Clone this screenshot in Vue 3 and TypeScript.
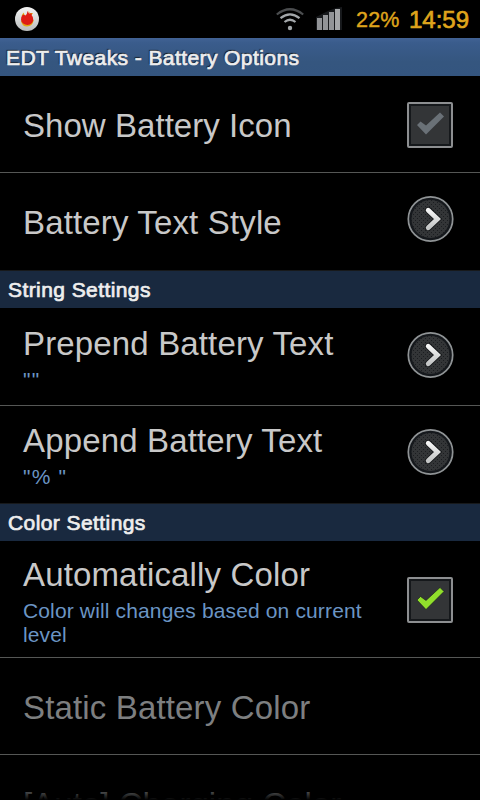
<script setup lang="ts">
type Control = 'check-off' | 'check-on' | 'arrow' | 'none'

interface Option {
  id: string
  title: string
  summary?: string
  control: Control
  disabled?: boolean
}

interface Section {
  heading?: string
  options: Option[]
}

const sections: Section[] = [
  {
    options: [
      { id: 'show-icon', title: 'Show Battery Icon', control: 'check-off' },
      { id: 'text-style', title: 'Battery Text Style', control: 'arrow' },
    ],
  },
  {
    heading: 'String Settings',
    options: [
      { id: 'prepend', title: 'Prepend Battery Text', summary: '""', control: 'arrow' },
      { id: 'append', title: 'Append Battery Text', summary: '"% "', control: 'arrow' },
    ],
  },
  {
    heading: 'Color Settings',
    options: [
      {
        id: 'auto-color',
        title: 'Automatically Color',
        summary: 'Color will changes based on current level',
        control: 'check-on',
      },
      { id: 'static-color', title: 'Static Battery Color', control: 'none', disabled: true },
      { id: 'charging-color', title: '[Auto] Charging Color', control: 'none', disabled: true },
    ],
  },
]
</script>

<template>
  <div class="screen">
    <header class="status">
      <svg class="notice" width="26" height="26" viewBox="0 0 26 26">
        <defs>
          <linearGradient id="disc" x1="0" y1="0" x2="0" y2="1">
            <stop offset="0" stop-color="#f4f4f4" />
            <stop offset="1" stop-color="#b9bcbc" />
          </linearGradient>
        </defs>
        <circle cx="13" cy="13" r="12" fill="url(#disc)" />
        <path d="M7 15 Q8 20.500 13 20.500 Q18.500 20.500 19.800 14Z M9.500 6.500 L11 10 H7.500Z M14 4.500 L16 7 L19 7 L17 10Z" fill="#e2a812" />
        <path
          d="M13.600 5 L15 7.500 L18 7.500 L17.500 9 Q19.500 11 19.300 14 Q18.500 18.700 13.500 18.900 Q8 18.700 7 14 Q6.800 10.500 9 8.500 L11.500 9.500 L12.800 8Z"
          fill="#df1c14"
        />
      </svg>
      <svg class="wifi" width="28" height="23" viewBox="0 0 28 23" fill="none" stroke-linecap="butt">
        <path d="M.8 6.500 Q14 -4 27.200 6.500" stroke="#4b4d4f" stroke-width="2.200" />
        <path d="M4.500 10.200 Q14 2.500 23.500 10.200" stroke="#a3a7aa" stroke-width="2.200" />
        <path d="M8.500 14 Q14 9.500 19.500 14" stroke="#a3a7aa" stroke-width="2.200" />
        <circle cx="14" cy="20" r="2.200" fill="#a3a7aa" />
      </svg>
      <svg class="signal" width="27" height="25" viewBox="0 0 27 25">
        <path d="M0 11L6 8L12 5L20 2L26 1V24H0Z" fill="#17191c" />
        <g fill="#929497">
          <rect x="1" y="12" width="5" height="12" />
          <rect x="7" y="9" width="5" height="15" />
          <rect x="13" y="6" width="5" height="18" />
          <rect x="19" y="3" width="5" height="21" fill="#a5a7a9" />
        </g>
      </svg>
      <span class="percent">22%</span>
      <span class="clock">14:59</span>
    </header>

    <h1 class="titlebar">EDT Tweaks - Battery Options</h1>

    <main>
      <section v-for="(section, index) in sections" :key="index">
        <h2 v-if="section.heading" class="heading">{{ section.heading }}</h2>
        <div
          v-for="option in section.options"
          :key="option.id"
          class="row"
          :class="[option.id, { disabled: option.disabled, detailed: option.summary }]"
        >
          <div class="copy">
            <div class="title">{{ option.title }}</div>
            <div v-if="option.summary" class="summary">{{ option.summary }}</div>
          </div>
          <svg v-if="option.control === 'arrow'" class="control" width="48" height="48" viewBox="0 0 48 48">
            <defs>
              <pattern :id="`dots-${option.id}`" width="4" height="4" patternUnits="userSpaceOnUse">
                <rect width="4" height="4" fill="#333537" />
                <rect x="1" y="1" width="1" height="1" fill="#1b1d20" />
                <rect x="3" y="3" width="1" height="1" fill="#1b1d20" />
              </pattern>
              <linearGradient :id="`shine-${option.id}`" x1="0" y1="0" x2="0" y2="1">
                <stop offset="0" stop-color="#f5f5f5" />
                <stop offset="1" stop-color="#c3c5c5" />
              </linearGradient>
            </defs>
            <circle cx="24.500" cy="24" r="22.200" fill="#15181c" stroke="#8f9395" stroke-width="1.700" />
            <circle cx="24.500" cy="24" r="19" :fill="`url(#dots-${option.id})`" />
            <path
              d="M22.200 15.200 L31.500 24 L22.200 32.800"
              fill="none"
              stroke="#17191b"
              stroke-width="6.500"
              stroke-linecap="round"
            />
            <path
              d="M22.200 15.200 L31.500 24 L22.200 32.800"
              fill="none"
              :stroke="`url(#shine-${option.id})`"
              stroke-width="4.800"
              stroke-linecap="round"
            />
          </svg>
          <svg v-else-if="option.control !== 'none'" class="control" width="48" height="48" viewBox="0 0 48 48">
            <rect x="2" y="2" width="44" height="44" rx="1" fill="#15181b" stroke="#8d8f91" stroke-width="2" />
            <rect x="5" y="5" width="38" height="38" fill="#333537" />
            <path
              class="tick"
              :class="{ on: option.control === 'check-on' }"
              d="M11 24 L14.500 20.500 L20 24.500 L34 11.500 L38 15.500 L20 33.500Z"
            />
          </svg>
        </div>
      </section>
    </main>
    <div class="fade"></div>
  </div>
</template>

<style>
body {
  background: #000;
}
</style>

<style scoped>
.screen {
  position: relative;
  box-sizing: border-box;
  width: 480px;
  height: 800px;
  overflow: hidden;
  background: #000;
  font-family: 'Liberation Sans', Arial, sans-serif;
}
h1,
h2 {
  margin: 0;
  font-weight: 400;
}
.status {
  display: flex;
  height: 38px;
  box-sizing: border-box;
  padding-left: 14px;
  color: #dfa41c;
  white-space: nowrap;
}
.notice {
  margin-top: 6px;
}
.wifi {
  margin: 8px 0 0 236px;
}
.signal {
  margin: 6px 0 0 12px;
}
.percent {
  width: 53px;
  margin-left: 13px;
  font-size: 21.5px;
  letter-spacing: 0.2px;
  line-height: 40px;
  -webkit-text-stroke: 0.4px #dfa41c;
}
.clock {
  font-size: 24px;
  line-height: 40px;
  -webkit-text-stroke: 0.7px #dfa41c;
}
.titlebar {
  height: 38px;
  box-sizing: border-box;
  padding-left: 6px;
  background: linear-gradient(#416294 0, #3a5c8c 5px, #35567f 24px, #34557f);
  color: #eee;
  font-size: 21px;
  letter-spacing: 0.42px;
  line-height: 40px;
  text-shadow: -1px -1px 1px #111;
  -webkit-text-stroke: 0.7px #eee;
  white-space: nowrap;
}
.heading {
  height: 38px;
  box-sizing: border-box;
  padding-left: 8px;
  border-top: 1px solid #17191b;
  background: #19293f;
  color: #eee;
  font-size: 21px;
  letter-spacing: 0.42px;
  line-height: 38px;
  -webkit-text-stroke: 0.7px #eee;
}
.row {
  display: flex;
  justify-content: space-between;
  box-sizing: border-box;
  height: 97px;
  padding: 0 26px 0 23px;
  border-bottom: 1px solid #555755;
}
.text-style,
.append {
  border-bottom: 0;
}
.prepend {
  height: 98px;
}
.auto-color {
  height: 117px;
}
.copy {
  width: 350px;
  padding-top: 30px;
}
.detailed .copy {
  padding-top: 16px;
}
.append .copy {
  padding-top: 15px;
}
.auto-color .copy {
  padding-top: 14px;
}
.title {
  color: #c8c8c8;
  font-size: 33px;
  letter-spacing: 0.15px;
  line-height: 40px;
  white-space: nowrap;
}
.show-icon .title,
.charging-color .title {
  letter-spacing: 0.05px;
}
.disabled .title {
  color: #7d7f80;
}
.summary {
  margin-top: 4px;
  color: #6b95c4;
  font-size: 21px;
  letter-spacing: 0.14px;
  line-height: 24px;
}
.prepend .summary,
.append .summary {
  letter-spacing: 1.2px;
}
.control {
  flex: none;
  margin-top: 22px;
}
.show-icon .control {
  margin-top: 25px;
}
.prepend .control {
  margin-top: 23px;
}
.auto-color .control {
  margin-top: 35px;
}
.tick {
  fill: #6a7177;
}
.tick.on {
  fill: #91df2c;
  stroke: #14171a;
  stroke-width: 0.6px;
}
.fade {
  position: absolute;
  right: 0;
  bottom: 0;
  left: 0;
  height: 14px;
  background: linear-gradient(transparent, #000);
}
</style>
